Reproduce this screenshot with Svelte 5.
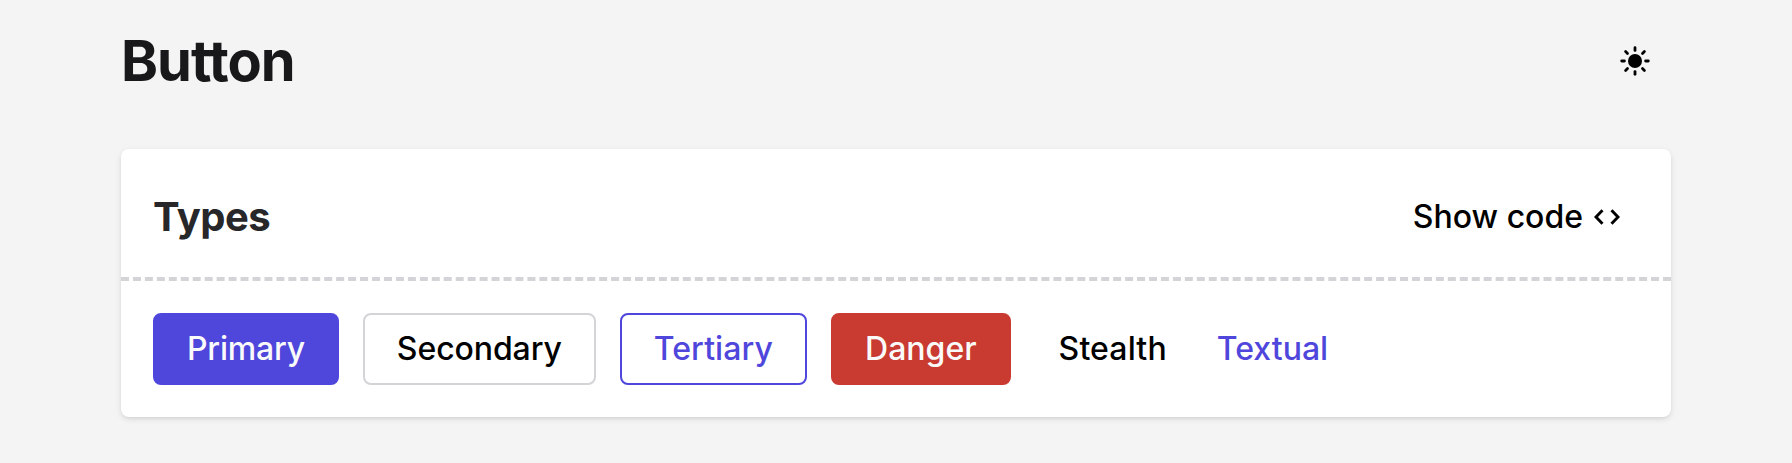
<script>
  const buttons = [
    { kind: 'primary', label: 'Primary' },
    { kind: 'secondary', label: 'Secondary' },
    { kind: 'tertiary', label: 'Tertiary' },
    { kind: 'danger', label: 'Danger' },
    { kind: 'stealth', label: 'Stealth' },
    { kind: 'textual', label: 'Textual' }
  ];
  const rays = [0, 45, 90, 135, 180, 225, 270, 315];
</script>

<main>
  <header class="top">
    <h1>Button</h1>
    <button class="theme" aria-label="Toggle theme">
      <svg width="32" height="32" viewBox="-16 -16 32 32">
        <circle r="7" />
        {#each rays as angle}
          <path d="M0 -13.3V-10.6" transform="rotate({angle})" />
        {/each}
      </svg>
    </button>
  </header>

  <section class="card">
    <div class="card-head">
      <h2>Types</h2>
      <button class="code">
        <span>Show code</span>
        <svg width="28" height="18" viewBox="0 0 28 18">
          <path d="M9.5 2.2L3 9l6.5 6.8M18.5 2.2L25 9l-6.5 6.8" />
        </svg>
      </button>
    </div>
    <div class="row">
      {#each buttons as b}
        <button class="btn {b.kind}">{b.label}</button>
      {/each}
    </div>
  </section>
</main>

<style>
  :global(body) {
    margin: 0;
    background: #f4f4f4;
  }
  main {
    box-sizing: border-box;
    height: 463px;
    padding: 0 121px;
    font-family: Inter, sans-serif;
    overflow: hidden;
  }
  .top {
    display: flex;
    align-items: center;
    justify-content: space-between;
    height: 149px;
    padding-bottom: 27px;
    box-sizing: border-box;
  }
  h1 {
    margin: 0;
    font-size: 56px;
    line-height: 72px;
    font-weight: 700;
    letter-spacing: -1px;
    color: #18181b;
  }
  button {
    font: 500 32px/48px Inter, sans-serif;
    letter-spacing: -0.1px;
    color: #000;
    background: none;
    border: 0;
    padding: 0;
    white-space: nowrap;
  }
  svg {
    display: block;
  }
  .theme {
    margin-right: 20px;
  }
  .theme path {
    stroke: #000;
    stroke-width: 2.8;
    stroke-linecap: round;
  }
  .card {
    background: #fff;
    border-radius: 8px;
    box-shadow: 0 2px 6px rgba(0, 0, 0, 0.1), 0 2px 4px -2px rgba(0, 0, 0, 0.1);
  }
  .card-head {
    display: flex;
    align-items: center;
    justify-content: space-between;
    box-sizing: border-box;
    height: 132px;
    padding: 8px 50px 0 32px;
    border-bottom: 4px dashed #d4d4d8;
  }
  h2 {
    margin: 0;
    font-size: 40px;
    line-height: 56px;
    font-weight: 700;
    letter-spacing: -0.5px;
    color: #27272a;
  }
  .code {
    display: flex;
    align-items: center;
    gap: 10px;
    letter-spacing: 0;
  }
  .code path {
    fill: none;
    stroke: #000;
    stroke-width: 2.9;
  }
  .row {
    display: flex;
    gap: 24px;
    padding: 32px;
  }
  .btn {
    box-sizing: border-box;
    height: 72px;
    padding: 0 32px;
    border: 2px solid transparent;
    border-radius: 8px;
  }
  .primary {
    color: #fafafa;
    background: #4f46dc;
    border-color: #4f46dc;
    letter-spacing: -0.2px;
  }
  .secondary {
    border-color: #d4d4d8;
  }
  .tertiary {
    color: #4f46dc;
    border-color: #4f46dc;
    letter-spacing: 0.1px;
  }
  .danger {
    color: #fafafa;
    background: #c93a31;
    border-color: #c93a31;
    letter-spacing: 0;
  }
  .stealth {
    padding: 0 22px;
    letter-spacing: 0.15px;
  }
  .textual {
    padding: 0;
    color: #4f46dc;
    letter-spacing: 0;
  }
</style>
